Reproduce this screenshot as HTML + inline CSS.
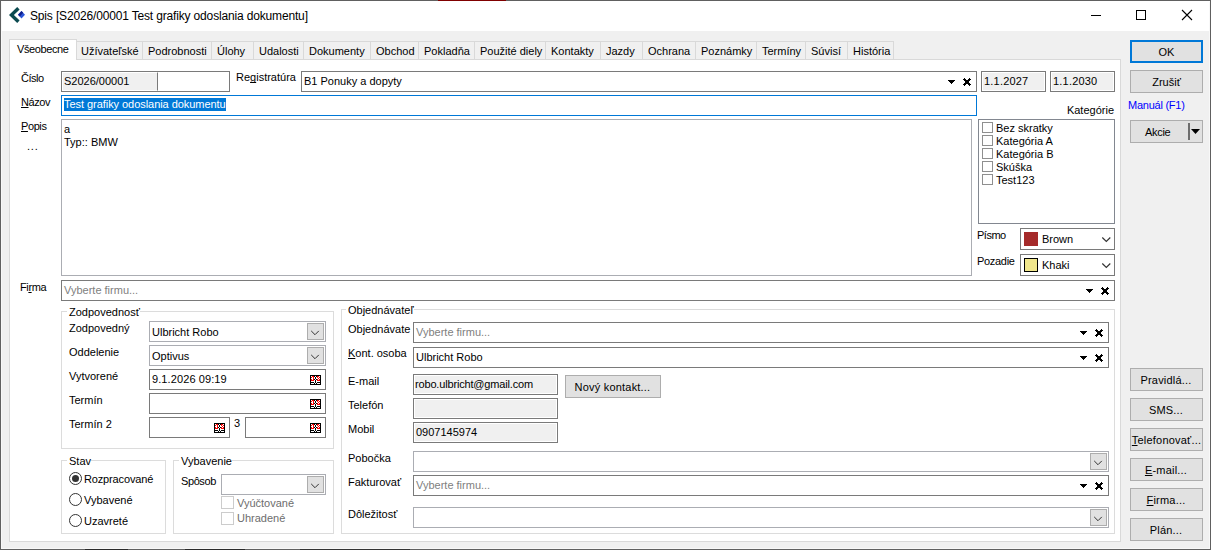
<!DOCTYPE html>
<html lang="sk">
<head>
<meta charset="utf-8">
<title>Spis</title>
<style>
html,body{margin:0;padding:0;background:#fff;}
body{width:1211px;height:550px;overflow:hidden;position:relative;font-family:"Liberation Sans",sans-serif;font-size:11px;color:#000;}
#win{position:absolute;left:0;top:0;width:1211px;height:550px;background:#f0f0f0;overflow:hidden;}
.a{position:absolute;box-sizing:border-box;}
.t{position:absolute;white-space:nowrap;line-height:13px;height:13px;}
.fld{position:absolute;box-sizing:border-box;border:1px solid #7a7a7a;background:#fff;}
.ro{position:absolute;box-sizing:border-box;border:1px solid #7a7a7a;background:#f0f0f0;box-shadow:inset 0 0 0 1px #fff;}
.cmb{position:absolute;box-sizing:border-box;border:1px solid #abadb3;background:#fff;}
.cbtn{position:absolute;box-sizing:border-box;right:1px;top:1px;width:17px;height:17px;border:1px solid #adadad;background:#e1e1e1;}
.btn{position:absolute;box-sizing:border-box;border:1px solid #adadad;background:#e1e1e1;text-align:center;line-height:23px;white-space:nowrap;}
.grp{position:absolute;box-sizing:border-box;border:1px solid #dcdcdc;}
.gl{position:absolute;white-space:nowrap;line-height:13px;background:#fff;padding:0 0 0 2px;}
.tab{position:absolute;box-sizing:border-box;top:41px;height:18px;border:1px solid #d9d9d9;border-bottom:none;border-left:none;background:#f0f0f0;line-height:19px;padding-left:5px;white-space:nowrap;}
.ph{color:#808080;}
.chk{position:absolute;box-sizing:border-box;width:11px;height:11px;border:1px solid #8f8f8f;background:#fff;}
.chk13{position:absolute;box-sizing:border-box;width:13px;height:13px;border:1px solid #cccccc;background:#fff;}
.rad{position:absolute;box-sizing:border-box;width:13px;height:13px;border:1px solid #333;border-radius:50%;background:#fff;}
u{text-decoration:underline;text-decoration-skip-ink:none;}
svg{position:absolute;overflow:visible;}
</style>
</head>
<body>
<div id="win">
<!-- title bar -->
<div class="a" style="left:0;top:0;width:1211px;height:31px;background:#fff;"></div>
<div class="t" style="left:30px;top:8px;font-size:12px;line-height:16px;height:16px;letter-spacing:-0.16px;">Spis [S2026/00001 Test grafiky odoslania dokumentu]</div>
<svg style="left:8px;top:6px;" width="18" height="18" viewBox="0 0 18 18"><path d="M9.2 1 L1 9 L9.2 17 L11.6 14.6 L5.9 9 L11.6 3.4 Z" fill="#0b4a4f"/><path d="M13.5 5 L17 8.7 L13.5 12.5 L10 8.7 Z" fill="#2b55d8"/><path d="M13.5 5 L15.2 6.8 L11.8 10.4 L10 8.7 Z" fill="#10208c"/></svg>
<svg style="left:1091px;top:10px;" width="120" height="12" viewBox="0 0 120 12"><path d="M0 5.5 H10" stroke="#000" stroke-width="1" fill="none"/><rect x="45.5" y="0.5" width="9" height="9" stroke="#000" stroke-width="1" fill="none"/><path d="M91 0 L101 10 M101 0 L91 10" stroke="#000" stroke-width="1.1" fill="none"/></svg>

<!-- tab pane -->
<div class="a" style="left:9px;top:59px;width:1112px;height:483px;background:#fff;border:1px solid #d9d9d9;"></div>
<!-- tabs -->
<div class="tab" style="left:77px;width:66px;padding-left:4px;">Užívateľské</div>
<div class="tab" style="left:143px;width:69px;">Podrobnosti</div>
<div class="tab" style="left:212px;width:42px;">Úlohy</div>
<div class="tab" style="left:254px;width:50px;">Udalosti</div>
<div class="tab" style="left:304px;width:67px;">Dokumenty</div>
<div class="tab" style="left:371px;width:48px;">Obchod</div>
<div class="tab" style="left:419px;width:56px;">Pokladňa</div>
<div class="tab" style="left:475px;width:71px;">Použité diely</div>
<div class="tab" style="left:546px;width:55px;">Kontakty</div>
<div class="tab" style="left:601px;width:42px;">Jazdy</div>
<div class="tab" style="left:643px;width:53px;">Ochrana</div>
<div class="tab" style="left:696px;width:61px;">Poznámky</div>
<div class="tab" style="left:757px;width:49px;">Termíny</div>
<div class="tab" style="left:806px;width:42px;">Súvisí</div>
<div class="tab" style="left:848px;width:46px;">História</div>
<div class="a" style="left:9px;top:39px;width:68px;height:21px;background:#fff;border:1px solid #d9d9d9;border-bottom:none;line-height:19px;padding-left:7px;white-space:nowrap;letter-spacing:-0.4px;">Všeobecne</div>

<!-- row 1 -->
<div class="t" style="left:21px;top:72px;letter-spacing:-0.5px;">Číslo</div>
<div class="fld" style="left:61px;top:71px;width:169px;height:21px;"></div>
<div class="a" style="left:62px;top:72px;width:96px;height:19px;background:#f0f0f0;border:1px solid #fff;border-right:1px solid #7a7a7a;"></div>
<div class="t" style="left:64px;top:75px;">S2026/00001</div>
<div class="t" style="left:236px;top:71px;">Re<u>g</u>istratúra</div>
<div class="fld" style="left:301px;top:71px;width:676px;height:21px;"></div>
<div class="t" style="left:304px;top:75px;">B1 Ponuky a dopyty</div>
<svg style="left:948px;top:78px;" width="23" height="8" viewBox="0 0 23 8"><use href="#ax"/></svg>
<div class="ro" style="left:981px;top:71px;width:65px;height:21px;"></div>
<div class="t" style="left:984px;top:75px;letter-spacing:0.2px;">1.1.2027</div>
<div class="ro" style="left:1050px;top:71px;width:65px;height:21px;"></div>
<div class="t" style="left:1053px;top:75px;letter-spacing:0.2px;">1.1.2030</div>

<!-- row 2 -->
<div class="t" style="left:21px;top:96px;letter-spacing:-0.4px;"><u>N</u>ázov</div>
<div class="fld" style="left:61px;top:95px;width:916px;height:21px;border-color:#0078d7;"></div>
<div class="t" style="left:64px;top:98px;width:162px;background:#0078d7;color:#fff;letter-spacing:-0.05px;">Test grafiky odoslania dokumentu</div>
<div class="t" style="right:97px;top:104px;">Kategórie</div>

<!-- popis -->
<div class="t" style="left:21px;top:120px;letter-spacing:-0.4px;"><u>P</u>opis</div>
<div class="t" style="left:27px;top:140px;letter-spacing:0.8px;">...</div>
<div class="fld" style="left:61px;top:119px;width:911px;height:157px;border-color:#abadb3;"></div>
<div class="t" style="left:64px;top:123px;">a</div>
<div class="t" style="left:64px;top:136px;">Typ:: BMW</div>

<!-- kategorie list -->
<div class="fld" style="left:978px;top:119px;width:137px;height:105px;border-color:#828790;"></div>
<div class="chk" style="left:982px;top:122px;"></div><div class="t" style="left:996px;top:122px;">Bez skratky</div>
<div class="chk" style="left:982px;top:135px;"></div><div class="t" style="left:996px;top:135px;">Kategória A</div>
<div class="chk" style="left:982px;top:148px;"></div><div class="t" style="left:996px;top:148px;">Kategória B</div>
<div class="chk" style="left:982px;top:161px;"></div><div class="t" style="left:996px;top:161px;">Skúška</div>
<div class="chk" style="left:982px;top:174px;"></div><div class="t" style="left:996px;top:174px;">Test123</div>

<!-- pismo / pozadie -->
<div class="t" style="left:977px;top:229px;letter-spacing:-0.5px;">Písmo</div>
<div class="fld" style="left:1020px;top:228px;width:95px;height:22px;"></div>
<div class="a" style="left:1024px;top:232px;width:14px;height:14px;background:#a52a2a;"></div>
<div class="t" style="left:1042px;top:233px;">Brown</div>
<svg style="left:1102px;top:237px;" width="9" height="6" viewBox="0 0 9 6"><path d="M0.3 0.5 L4.3 4.5 L8.3 0.5" stroke="#333" stroke-width="1.15" fill="none"/></svg>
<div class="t" style="left:977px;top:255px;letter-spacing:-0.3px;">Pozadie</div>
<div class="fld" style="left:1020px;top:254px;width:95px;height:22px;"></div>
<div class="a" style="left:1024px;top:258px;width:14px;height:14px;background:#f0e68c;border:1px solid #000;"></div>
<div class="t" style="left:1042px;top:259px;">Khaki</div>
<svg style="left:1102px;top:263px;" width="9" height="6" viewBox="0 0 9 6"><path d="M0.3 0.5 L4.3 4.5 L8.3 0.5" stroke="#333" stroke-width="1.15" fill="none"/></svg>

<!-- firma -->
<div class="t" style="left:20px;top:281px;letter-spacing:-0.4px;">Fi<u>r</u>ma</div>
<div class="fld" style="left:61px;top:280px;width:1054px;height:21px;"></div>
<div class="t ph" style="left:64px;top:284px;">Vyberte firmu...</div>
<svg style="left:1086px;top:287px;" width="23" height="8" viewBox="0 0 23 8"><use href="#ax"/></svg>

<svg width="0" height="0" style="left:0;top:0;"><defs><g id="ax" fill="#000" shape-rendering="crispEdges"><rect x="0" y="2" width="7" height="1"/><rect x="1" y="3" width="5" height="1"/><rect x="2" y="4" width="3" height="1"/><rect x="3" y="5" width="1" height="1"/><rect x="16" y="0" width="1" height="1"/><rect x="21" y="0" width="1" height="1"/><rect x="15" y="1" width="3" height="1"/><rect x="20" y="1" width="3" height="1"/><rect x="16" y="2" width="6" height="1"/><rect x="17" y="3" width="4" height="1"/><rect x="17" y="4" width="4" height="1"/><rect x="16" y="5" width="6" height="1"/><rect x="15" y="6" width="3" height="1"/><rect x="20" y="6" width="3" height="1"/><rect x="16" y="7" width="1" height="1"/><rect x="21" y="7" width="1" height="1"/></g><g id="cal" shape-rendering="crispEdges"><rect x="0" y="0" width="11" height="10" fill="#000"/><rect x="1" y="1" width="1" height="1" fill="#fff"/><rect x="2" y="1" width="2" height="1" fill="#f00"/><rect x="5" y="1" width="1" height="1" fill="#fff"/><rect x="7" y="1" width="2" height="1" fill="#f00"/><rect x="9" y="1" width="1" height="1" fill="#fff"/><rect x="1" y="2" width="1" height="1" fill="#f00"/><rect x="2" y="2" width="1" height="1" fill="#fff"/><rect x="3" y="2" width="1" height="1" fill="#f00"/><rect x="4" y="2" width="1" height="1" fill="#fff"/><rect x="6" y="2" width="1" height="1" fill="#fff"/><rect x="7" y="2" width="1" height="1" fill="#f00"/><rect x="8" y="2" width="1" height="1" fill="#fff"/><rect x="9" y="2" width="1" height="1" fill="#f00"/><rect x="1" y="3" width="2" height="1" fill="#fff"/><rect x="3" y="3" width="1" height="1" fill="#f00"/><rect x="4" y="3" width="1" height="1" fill="#fff"/><rect x="6" y="3" width="2" height="1" fill="#fff"/><rect x="8" y="3" width="1" height="1" fill="#f00"/><rect x="9" y="3" width="1" height="1" fill="#fff"/><rect x="1" y="4" width="1" height="1" fill="#f00"/><rect x="2" y="4" width="1" height="1" fill="#fff"/><rect x="3" y="4" width="1" height="1" fill="#f00"/><rect x="5" y="4" width="1" height="1" fill="#fff"/><rect x="7" y="4" width="1" height="1" fill="#f00"/><rect x="8" y="4" width="1" height="1" fill="#fff"/><rect x="9" y="4" width="1" height="1" fill="#f00"/><rect x="1" y="5" width="3" height="1" fill="#f00"/><rect x="4" y="5" width="1" height="1" fill="#fff"/><rect x="6" y="5" width="1" height="1" fill="#fff"/><rect x="7" y="5" width="3" height="1" fill="#f00"/><rect x="1" y="6" width="4" height="1" fill="#fff"/><rect x="6" y="6" width="4" height="1" fill="#fff"/><rect x="4" y="7" width="1" height="1" fill="#fff"/><rect x="6" y="7" width="1" height="1" fill="#fff"/><rect x="1" y="8" width="3" height="1" fill="#fff"/><rect x="5" y="8" width="1" height="1" fill="#fff"/><rect x="7" y="8" width="3" height="1" fill="#fff"/></g></defs></svg>

<!-- Zodpovednost -->
<div class="grp" style="left:61px;top:311px;width:273px;height:138px;"></div>
<div class="gl" style="left:67px;top:306px;">Zodpovednosť</div>
<div class="t" style="left:69px;top:322px;">Zodpovedný</div>
<div class="cmb" style="left:149px;top:321px;width:177px;height:21px;"><div class="cbtn"><svg style="left:3px;top:6px;" width="8" height="6" viewBox="0 0 8 6"><path d="M0.2 0.9 L4 4.7 L7.8 0.9" stroke="#333" stroke-width="1" fill="none"/></svg></div></div>
<div class="t" style="left:152px;top:326px;">Ulbricht Robo</div>
<div class="t" style="left:69px;top:346px;">Oddelenie</div>
<div class="cmb" style="left:149px;top:345px;width:177px;height:21px;"><div class="cbtn"><svg style="left:3px;top:6px;" width="8" height="6" viewBox="0 0 8 6"><path d="M0.2 0.9 L4 4.7 L7.8 0.9" stroke="#333" stroke-width="1" fill="none"/></svg></div></div>
<div class="t" style="left:152px;top:350px;">Optivus</div>
<div class="t" style="left:69px;top:370px;">Vytvorené</div>
<div class="fld" style="left:149px;top:369px;width:177px;height:21px;"></div>
<div class="t" style="left:152px;top:373px;letter-spacing:0.1px;">9.1.2026 09:19</div>
<svg style="left:310px;top:375px;" width="11" height="10" viewBox="0 0 11 10"><use href="#cal"/></svg>
<div class="t" style="left:69px;top:394px;">Termín</div>
<div class="fld" style="left:149px;top:393px;width:177px;height:21px;"></div>
<svg style="left:310px;top:399px;" width="11" height="10" viewBox="0 0 11 10"><use href="#cal"/></svg>
<div class="t" style="left:69px;top:418px;">Termín 2</div>
<div class="fld" style="left:149px;top:417px;width:81px;height:21px;"></div>
<svg style="left:214px;top:423px;" width="11" height="10" viewBox="0 0 11 10"><use href="#cal"/></svg>
<div class="t" style="left:234px;top:417px;">3</div>
<div class="fld" style="left:245px;top:417px;width:81px;height:21px;"></div>
<svg style="left:310px;top:423px;" width="11" height="10" viewBox="0 0 11 10"><use href="#cal"/></svg>

<!-- Stav -->
<div class="grp" style="left:61px;top:460px;width:105px;height:74px;"></div>
<div class="gl" style="left:67px;top:455px;">Stav</div>
<div class="rad" style="left:69px;top:472px;"><div class="a" style="left:2px;top:2px;width:7px;height:7px;border-radius:50%;background:#333;"></div></div>
<div class="t" style="left:84px;top:473px;letter-spacing:-0.15px;">Rozpracované</div>
<div class="rad" style="left:69px;top:493px;"></div>
<div class="t" style="left:84px;top:494px;">Vybavené</div>
<div class="rad" style="left:69px;top:514px;"></div>
<div class="t" style="left:84px;top:515px;">Uzavreté</div>

<!-- Vybavenie -->
<div class="grp" style="left:173px;top:460px;width:161px;height:74px;"></div>
<div class="gl" style="left:179px;top:455px;">Vybavenie</div>
<div class="t" style="left:181px;top:475px;letter-spacing:-0.4px;">Spôsob</div>
<div class="cmb" style="left:221px;top:474px;width:105px;height:21px;"><div class="cbtn"><svg style="left:3px;top:6px;" width="8" height="6" viewBox="0 0 8 6"><path d="M0.2 0.9 L4 4.7 L7.8 0.9" stroke="#333" stroke-width="1" fill="none"/></svg></div></div>
<div class="chk13" style="left:221px;top:496px;"></div>
<div class="t" style="left:237px;top:497px;color:#6d6d6d;">Vyúčtované</div>
<div class="chk13" style="left:221px;top:512px;"></div>
<div class="t" style="left:237px;top:512px;color:#6d6d6d;">Uhradené</div>

<!-- Objednavatel -->
<div class="grp" style="left:341px;top:309px;width:774px;height:225px;"></div>
<div class="gl" style="left:346px;top:304px;">Objednávateľ</div>
<div class="t" style="left:348px;top:323px;">Objednávate</div>
<div class="fld" style="left:413px;top:322px;width:696px;height:21px;"></div>
<div class="t ph" style="left:416px;top:326px;">Vyberte firmu...</div>
<svg style="left:1080px;top:329px;" width="23" height="8" viewBox="0 0 23 8"><use href="#ax"/></svg>
<div class="t" style="left:348px;top:347px;"><u>K</u>ont. osoba</div>
<div class="fld" style="left:413px;top:347px;width:696px;height:21px;"></div>
<div class="t" style="left:416px;top:351px;">Ulbricht Robo</div>
<svg style="left:1080px;top:354px;" width="23" height="8" viewBox="0 0 23 8"><use href="#ax"/></svg>
<div class="t" style="left:348px;top:375px;">E-mail</div>
<div class="ro" style="left:413px;top:374px;width:145px;height:21px;"></div>
<div class="t" style="left:415px;top:378px;letter-spacing:-0.17px;">robo.ulbricht@gmail.com</div>
<div class="btn" style="left:565px;top:375px;width:96px;height:23px;letter-spacing:0.2px;text-indent:-1px;">Nový kontakt...</div>
<div class="t" style="left:348px;top:399px;">Telefón</div>
<div class="ro" style="left:413px;top:398px;width:145px;height:21px;"></div>
<div class="t" style="left:348px;top:423px;">Mobil</div>
<div class="ro" style="left:413px;top:422px;width:145px;height:21px;"></div>
<div class="t" style="left:416px;top:426px;">0907145974</div>
<div class="t" style="left:348px;top:452px;">Pobočka</div>
<div class="cmb" style="left:413px;top:451px;width:696px;height:21px;"><div class="cbtn"><svg style="left:3px;top:6px;" width="8" height="6" viewBox="0 0 8 6"><path d="M0.2 0.9 L4 4.7 L7.8 0.9" stroke="#333" stroke-width="1" fill="none"/></svg></div></div>
<div class="t" style="left:348px;top:476px;">Fakturovať</div>
<div class="fld" style="left:413px;top:475px;width:696px;height:21px;"></div>
<div class="t ph" style="left:416px;top:479px;">Vyberte firmu...</div>
<svg style="left:1080px;top:482px;" width="23" height="8" viewBox="0 0 23 8"><use href="#ax"/></svg>
<div class="t" style="left:348px;top:508px;">Dôležitosť</div>
<div class="cmb" style="left:413px;top:507px;width:696px;height:21px;"><div class="cbtn"><svg style="left:3px;top:6px;" width="8" height="6" viewBox="0 0 8 6"><path d="M0.2 0.9 L4 4.7 L7.8 0.9" stroke="#333" stroke-width="1" fill="none"/></svg></div></div>

<!-- right buttons -->
<div class="btn" style="left:1130px;top:40px;width:73px;height:23px;border:2px solid #0078d7;line-height:21px;">OK</div>
<div class="btn" style="left:1130px;top:70px;width:73px;height:23px;">Zrušiť</div>
<div class="t" style="left:1128px;top:99px;color:#0000ff;letter-spacing:-0.25px;">Manuál (F1)</div>
<div class="btn" style="left:1130px;top:120px;width:73px;height:23px;text-align:left;padding-left:14px;letter-spacing:-0.3px;">Akcie</div>
<div class="a" style="left:1188px;top:123px;width:2px;height:17px;background:#6d6d6d;"></div>
<svg style="left:1191px;top:129px;" width="9" height="5" viewBox="0 0 9 5"><path d="M0 0 H9 L4.5 5 Z" fill="#000"/></svg>
<div class="btn" style="left:1130px;top:368px;width:73px;height:23px;letter-spacing:0.2px;text-indent:-1px;">Pravidlá...</div>
<div class="btn" style="left:1130px;top:398px;width:73px;height:23px;letter-spacing:0.2px;text-indent:-1px;">SMS...</div>
<div class="btn" style="left:1130px;top:428px;width:73px;height:23px;letter-spacing:0.2px;"><u>T</u>elefonovať...</div>
<div class="btn" style="left:1130px;top:458px;width:73px;height:23px;letter-spacing:0.2px;text-indent:-1px;"><u>E</u>-mail...</div>
<div class="btn" style="left:1130px;top:488px;width:73px;height:23px;letter-spacing:0.2px;text-indent:-1px;"><u>F</u>irma...</div>
<div class="btn" style="left:1130px;top:518px;width:73px;height:23px;letter-spacing:0.2px;text-indent:-1px;">Plán...</div>

<!-- window borders -->
<div class="a" style="left:0;top:0;width:1211px;height:550px;border:1px solid #606060;box-shadow:inset 0 0 0 1px #f8f8f8;"></div>
<div class="a" style="left:1px;top:1px;width:1209px;height:1px;background:#fff;"></div>
<div class="a" style="left:438px;top:0;width:68px;height:1px;background:#800000;"></div>
<div class="a" style="left:85px;top:549px;width:43px;height:1px;background:#2a2a2a;"></div>
<div class="a" style="left:185px;top:549px;width:60px;height:1px;background:#2a2a2a;"></div>
<div class="a" style="left:300px;top:549px;width:110px;height:1px;background:#333;"></div>
</div>
</body>
</html>
